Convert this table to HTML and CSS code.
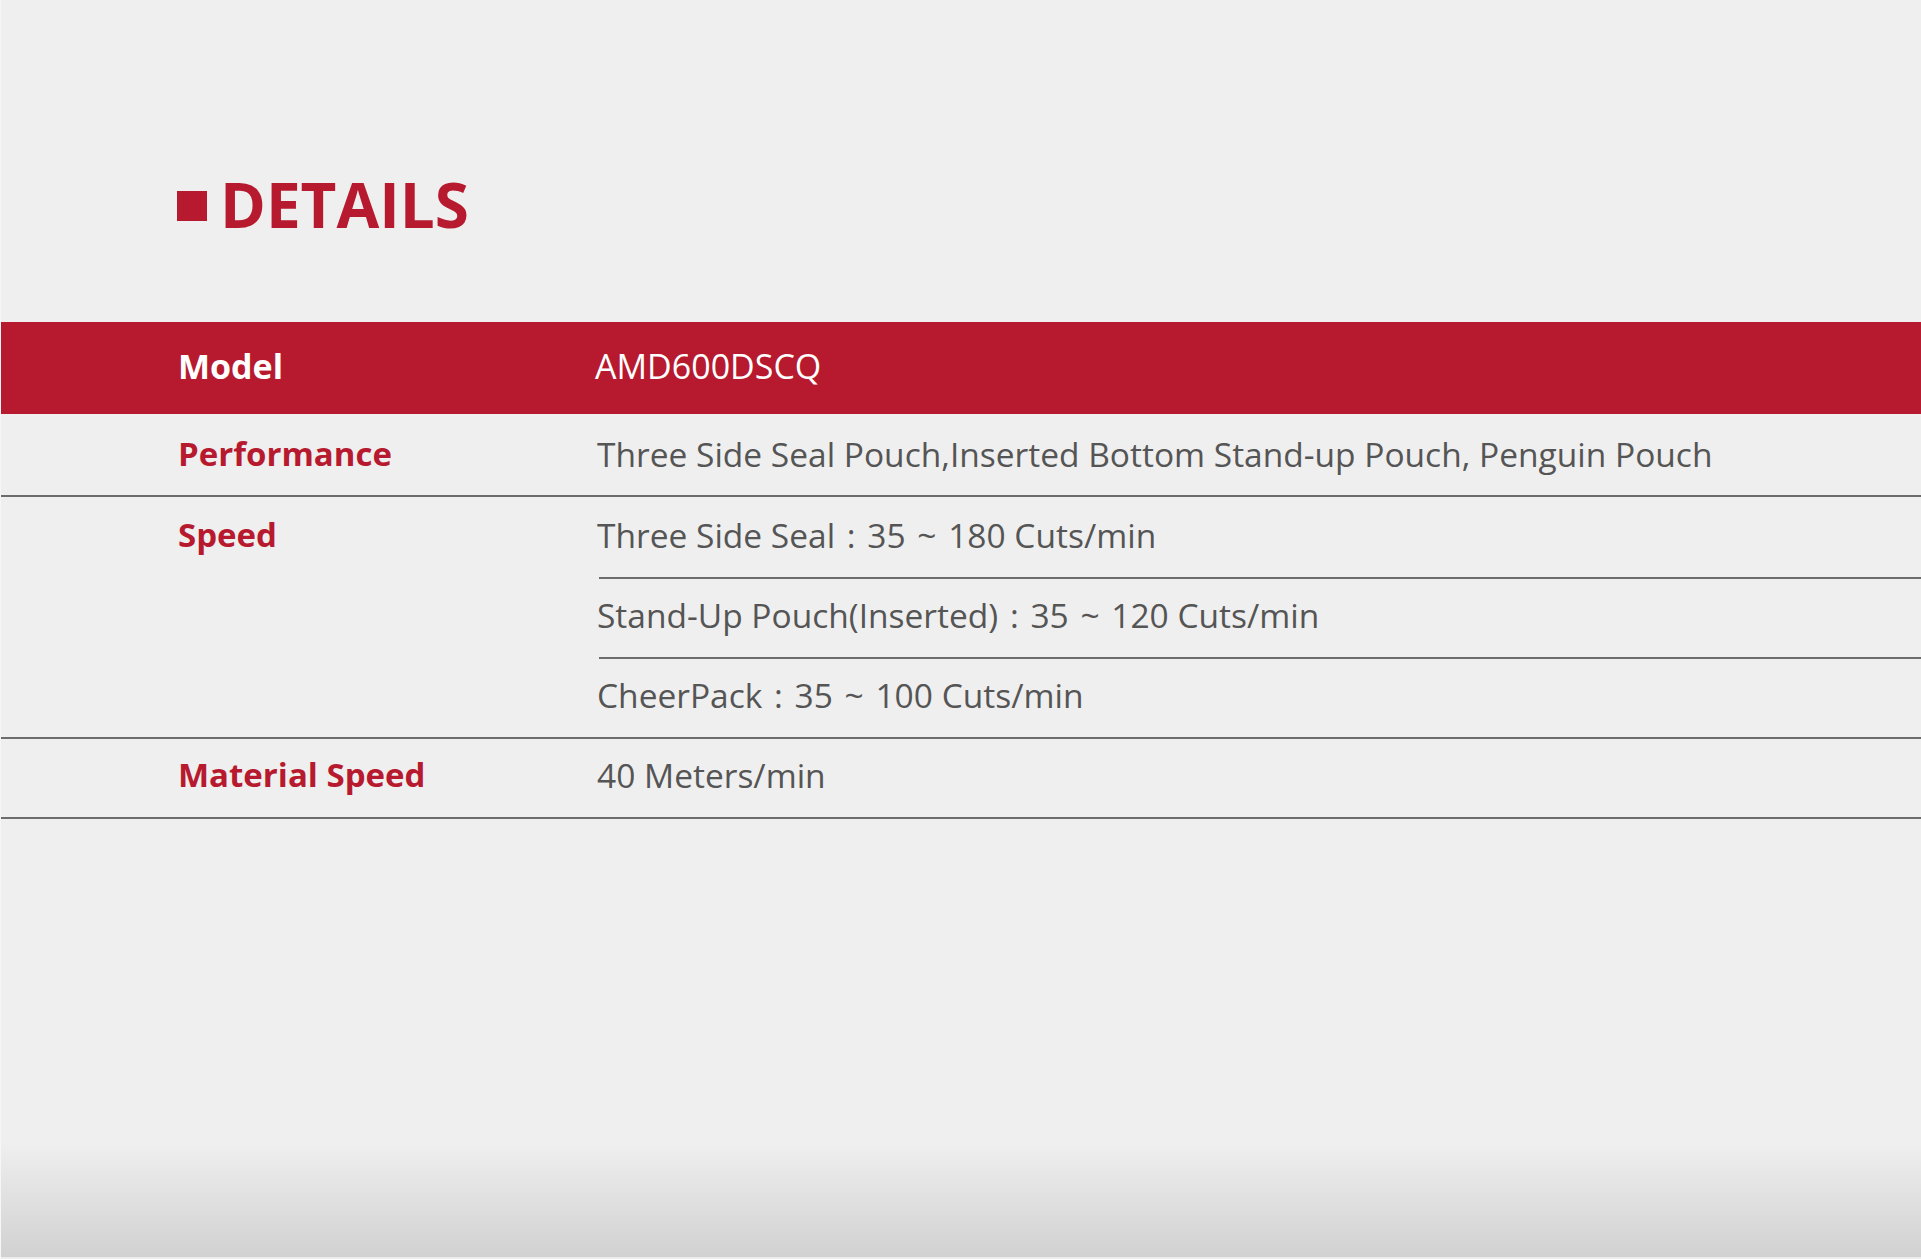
FILE: index.html
```html
<!DOCTYPE html>
<html lang="en">
<head>
<meta charset="utf-8">
<title>Details</title>
<link rel="stylesheet" href="styles.css">
</head>
<body>
<div class="page">
  <h2 class="title"><span class="square"></span><span class="title-text">DETAILS</span></h2>
  <div class="specs">
    <div class="row row-head">
      <div class="label">Model</div>
      <div class="values"><div class="value">AMD600DSCQ</div></div>
    </div>
    <div class="row row-perf">
      <div class="label">Performance</div>
      <div class="values"><div class="value">Three Side Seal Pouch,Inserted Bottom Stand-up Pouch, Penguin Pouch</div></div>
    </div>
    <div class="row row-speed">
      <div class="label">Speed</div>
      <div class="values">
        <div class="value sub">Three Side Seal <span class="sep">:</span> 35 <span class="sep">~</span> 180 Cuts/min</div>
        <div class="value sub">Stand-Up Pouch(Inserted) <span class="sep">:</span> 35 <span class="sep">~</span> 120 Cuts/min</div>
        <div class="value sub">CheerPack <span class="sep">:</span> 35 <span class="sep">~</span> 100 Cuts/min</div>
      </div>
    </div>
    <div class="row row-mat">
      <div class="label">Material Speed</div>
      <div class="values"><div class="value">40 Meters/min</div></div>
    </div>
  </div>
</div>
</body>
</html>
```

FILE: styles.css
```css
html, body {
  margin: 0;
  padding: 0;
}
body {
  font-family: "Open Sans", "Noto Sans", "Liberation Sans", sans-serif;
  background: #efefef;
}
.page {
  box-sizing: border-box;
  height: 1259px;
  overflow: hidden;
  border-left: 1px solid #f6f6f6;
  background: linear-gradient(to bottom, #efefef 0, #efefef 1143px, #d1d1d1 1257px, #ededed 1257px);
  padding-top: 173px;
}
.title {
  margin: 0 0 87px 176px;
  display: flex;
  align-items: center;
  height: 62px;
  font-size: 62px;
  line-height: 62px;
  font-weight: 700;
  color: #b71a2e;
}
.square {
  width: 30px;
  height: 30px;
  background: #b71a2e;
  margin-right: 13px;
  margin-top: 3px;
  flex: none;
}
.specs {
  width: 100%;
}
.row {
  display: grid;
  grid-template-columns: 596px 1fr;
  border-bottom: 2px solid #6c6c6c;
}
.label {
  padding-left: 177px;
  font-size: 33px;
  font-weight: 700;
  color: #b71a2e;
}
.value {
  font-size: 33.5px;
  color: #555555;
}
.sep {
  margin: 0 3px;
}
.row-head {
  background: #b71a2e;
  border-bottom: none;
  height: 92px;
}
.row-head .label {
  font-size: 34px;
}
.row-head .value {
  font-size: 34px;
  margin-left: -2px;
}
.row-head .label,
.row-head .value {
  color: #ffffff;
  line-height: 88px;
}
.row-perf .label,
.row-perf .value {
  line-height: 80px;
  height: 81px;
}
.row-speed .label {
  line-height: 76px;
}
.sub {
  height: 80px;
  line-height: 76px;
}
.sub + .sub {
  height: 78px;
  border-top: 2px solid #6c6c6c;
  margin-left: 2px;
  padding-left: 0;
  line-height: 72px;
}
.sub + .sub {
  text-indent: -2px;
}
.row-mat .label,
.row-mat .value {
  height: 78px;
  line-height: 72px;
}
```
